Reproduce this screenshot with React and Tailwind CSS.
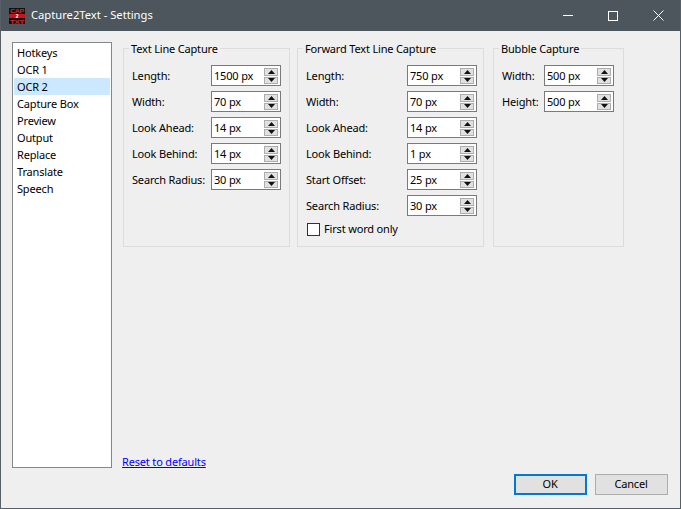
import React from "react";

const items = ["Hotkeys", "OCR 1", "OCR 2", "Capture Box", "Preview", "Output", "Replace", "Translate", "Speech"];

const textLine = [
  ["Length:", "1500 px"],
  ["Width:", "70 px"],
  ["Look Ahead:", "14 px"],
  ["Look Behind:", "14 px"],
  ["Search Radius:", "30 px"],
];

const forwardLine = [
  ["Length:", "750 px"],
  ["Width:", "70 px"],
  ["Look Ahead:", "14 px"],
  ["Look Behind:", "1 px"],
  ["Start Offset:", "25 px"],
  ["Search Radius:", "30 px"],
];

const bubble = [
  ["Width:", "500 px"],
  ["Height:", "500 px"],
];

const Spin = ({ value }) => (
  <div className="w-[70px] h-[21px] border border-[#7a7a7a] bg-white flex items-center justify-between pl-[2px] pr-[2px]">
    <span className="mt-[1px]">{value}</span>
    <div className="w-[14px] h-[16px] flex flex-col gap-[1px]">
      <div className="h-[8px] bg-[#e1e1e1] border border-[#adadad] flex items-center justify-center">
        <svg width="7" height="4" viewBox="0 0 7 4"><path d="M3.5 0L7 4H0z" fill="#111" /></svg>
      </div>
      <div className="h-[7px] bg-[#e1e1e1] border border-[#adadad] flex items-center justify-center">
        <svg width="7" height="4" viewBox="0 0 7 4"><path d="M0 0H7L3.5 4z" fill="#111" /></svg>
      </div>
    </div>
  </div>
);

const Row = ({ label, value, labelW }) => (
  <div className="flex items-center h-[21px]">
    <span className={`${labelW} mt-[1px] whitespace-nowrap`}>{label}</span>
    <Spin value={value} />
  </div>
);

const Group = ({ title, rows, width, labelW, children }) => (
  <fieldset className={`${width} h-[206px] border border-[#dcdcdc] pl-[8px]`}>
    <legend className="-ml-[3px] px-[2px] leading-[15px]">{title}</legend>
    <div className="flex flex-col gap-[5px] mt-[9px]">
      {rows.map(([label, value]) => (
        <Row key={label} label={label} value={value} labelW={labelW} />
      ))}
    </div>
    {children}
  </fieldset>
);

const App = () => {
  return (
    <div
      className="w-[681px] h-[509px] flex flex-col bg-[#efefef] border border-t-0 border-[#566066] text-[11px] tracking-[-0.17px] text-black overflow-hidden"
      style={{ fontFamily: '"Noto Sans", sans-serif' }}
    >
      {/* title bar */}
      <div className="h-[31px] shrink-0 -mx-[1px] bg-[#4c565c] flex items-center text-white pl-[9px]">
        <svg width="16" height="16" viewBox="0 0 16 16" className="shrink-0">
          <rect width="16" height="16" fill="#111" />
          <rect y="6" width="16" height="4" fill="#c8141e" />
          <text x="1" y="4.8" fontSize="4.8" fontWeight="700" fontFamily="Liberation Sans" fill="#d9252a" textLength="14" lengthAdjust="spacingAndGlyphs">CAP</text>
          <text x="8" y="10.3" textAnchor="middle" fontSize="4.8" fontWeight="700" fontFamily="Liberation Sans" fill="#fff">2</text>
          <text x="1" y="15.8" fontSize="4.8" fontWeight="700" fontFamily="Liberation Sans" fill="#d9252a" textLength="14" lengthAdjust="spacingAndGlyphs">TXT</text>
        </svg>
        <span className="ml-[6px] text-[11.2px] tracking-normal">Capture2Text - Settings</span>
        <div className="ml-auto flex h-full">
          <div className="w-[45px] flex items-center justify-center">
            <div className="w-[10px] h-[1px] bg-white" />
          </div>
          <div className="w-[45px] flex items-center justify-center">
            <div className="w-[10px] h-[10px] border border-white" />
          </div>
          <div className="w-[46px] flex items-center justify-center">
            <svg width="11" height="11" viewBox="0 0 11 11"><path d="M.5.5l10 10M10.5.5l-10 10" stroke="#fff" fill="none" /></svg>
          </div>
        </div>
      </div>

      <div className="flex-1 flex flex-col px-[11px] pt-[11px] pb-[13px]">
        <div className="flex">
          {/* page list */}
          <div className="w-[100px] h-[426px] border border-[#82878c] bg-white p-[1px] shrink-0">
            {items.map((item) => (
              <div
                key={item}
                className={`h-[17px] leading-[17px] pl-[3px] ${item === "OCR 2" ? "bg-[#cce8ff]" : ""}`}
              >
                {item}
              </div>
            ))}
          </div>

          {/* settings */}
          <div className="flex-1 ml-[11px] flex flex-col">
            <div className="flex items-start -mt-[1px]">
              <Group title="Text Line Capture" rows={textLine} width="w-[167px]" labelW="w-[79px]" />
              <Group title="Forward Text Line Capture" rows={forwardLine} width="w-[187px] ml-[7px]" labelW="w-[101px]">
                <label className="flex items-center h-[17px] mt-[5px] ml-[1px]">
                  <span className="w-[13px] h-[13px] border border-[#333] bg-white mr-[4px]" />
                  First word only
                </label>
              </Group>
              <Group title="Bubble Capture" rows={bubble} width="w-[131px] ml-[9px]" labelW="w-[42px]" />
            </div>
            <div className="mt-auto -mb-[2px] -ml-[1px]">
              <a className="text-[#0000ff] underline">Reset to defaults</a>
            </div>
          </div>
        </div>

        <div className="flex justify-end mt-auto gap-[8px] pr-[1px]">
          <button className="w-[73px] h-[21px] bg-[#e1e1e1] border-2 border-[#0078d7] pr-[1px]">OK</button>
          <button className="w-[73px] h-[21px] bg-[#e1e1e1] border border-[#adadad] pr-[1px]">Cancel</button>
        </div>
      </div>
    </div>
  );
};

export default App;
